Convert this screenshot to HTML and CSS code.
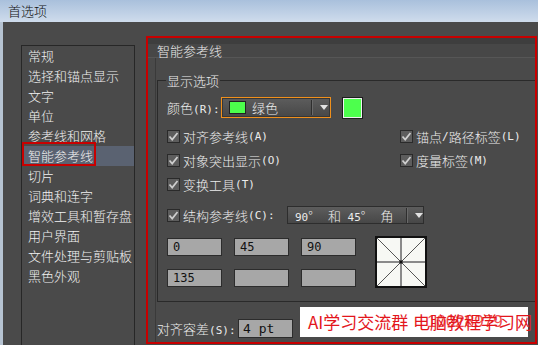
FILE: index.html
```html
<!DOCTYPE html>
<html lang="zh-CN">
<head>
<meta charset="utf-8">
<title>首选项</title>
<link rel="stylesheet" href="styles.css">
</head>
<body>
<div class="window">
  <div class="titlebar">首选项</div>
  <div class="main">
    <ul class="sidebar">
      <li>常规</li>
      <li>选择和锚点显示</li>
      <li>文字</li>
      <li>单位</li>
      <li>参考线和网格</li>
      <li class="active">智能参考线</li>
      <li>切片</li>
      <li>词典和连字</li>
      <li>增效工具和暂存盘</li>
      <li>用户界面</li>
      <li>文件处理与剪贴板</li>
      <li>黑色外观</li>
    </ul>
    <section class="panel">
      <div class="panel-head">智能参考线</div>
      <div class="panel-body">
        <fieldset class="group">
          <legend>显示选项</legend>
          <div class="color-row">
            <span class="label">颜色<span class="m">(R):</span></span>
            <div class="select focus">
              <span class="swatch-sm"></span>
              <span class="sel-text">绿色</span>
              <span class="sep"></span>
              <span class="arrow"></span>
            </div>
            <span class="swatch-lg"></span>
          </div>
          <div class="checks">
            <div class="check"><svg class="box" viewBox="0 0 13 13"><rect x="0.5" y="0.5" width="12" height="12" fill="#5d5d5d" stroke="#2a2a2a"/><path d="M2.5 6.5 L5.2 9.6 L10.5 3" fill="none" stroke="#cfcfcf" stroke-width="1.7"/></svg>对齐参考线<span class="m">(A)</span></div>
            <div class="check"><svg class="box" viewBox="0 0 13 13"><rect x="0.5" y="0.5" width="12" height="12" fill="#5d5d5d" stroke="#2a2a2a"/><path d="M2.5 6.5 L5.2 9.6 L10.5 3" fill="none" stroke="#cfcfcf" stroke-width="1.7"/></svg>锚点<span class="m">/</span>路径标签<span class="m">(L)</span></div>
            <div class="check"><svg class="box" viewBox="0 0 13 13"><rect x="0.5" y="0.5" width="12" height="12" fill="#5d5d5d" stroke="#2a2a2a"/><path d="M2.5 6.5 L5.2 9.6 L10.5 3" fill="none" stroke="#cfcfcf" stroke-width="1.7"/></svg>对象突出显示<span class="m">(O)</span></div>
            <div class="check"><svg class="box" viewBox="0 0 13 13"><rect x="0.5" y="0.5" width="12" height="12" fill="#5d5d5d" stroke="#2a2a2a"/><path d="M2.5 6.5 L5.2 9.6 L10.5 3" fill="none" stroke="#cfcfcf" stroke-width="1.7"/></svg>度量标签<span class="m">(M)</span></div>
            <div class="check"><svg class="box" viewBox="0 0 13 13"><rect x="0.5" y="0.5" width="12" height="12" fill="#5d5d5d" stroke="#2a2a2a"/><path d="M2.5 6.5 L5.2 9.6 L10.5 3" fill="none" stroke="#cfcfcf" stroke-width="1.7"/></svg>变换工具<span class="m">(T)</span></div>
          </div>
          <div class="struct-row">
            <div class="check struct"><svg class="box" viewBox="0 0 13 13"><rect x="0.5" y="0.5" width="12" height="12" fill="#5d5d5d" stroke="#2a2a2a"/><path d="M2.5 6.5 L5.2 9.6 L10.5 3" fill="none" stroke="#cfcfcf" stroke-width="1.7"/></svg>结构参考线<span class="m">(C):</span></div>
            <div class="select wide">
              <span class="sel-text"><span class="m">90</span><span class="fw">°</span><span class="m"> </span>和<span class="m"> 45</span><span class="fw">°</span><span class="m"> </span>角</span>
              <span class="sep"></span>
              <span class="arrow"></span>
            </div>
          </div>
          <div class="angles">
            <div class="angle-grid">
              <div class="field">0</div>
              <div class="field">45</div>
              <div class="field">90</div>
              <div class="field">135</div>
              <div class="field"></div>
              <div class="field"></div>
            </div>
            <svg class="diagram" width="52" height="52" viewBox="0 0 52 52">
              <rect x="1" y="1" width="50" height="50" fill="#f7f8f4" stroke="#111" stroke-width="2"/>
              <line x1="26" y1="2" x2="26" y2="50" stroke="#8a8a8a" stroke-width="2"/>
              <line x1="2" y1="26" x2="50" y2="26" stroke="#8a8a8a" stroke-width="2"/>
              <line x1="2" y1="2" x2="50" y2="50" stroke="#555" stroke-width="1"/>
              <line x1="50" y1="2" x2="2" y2="50" stroke="#555" stroke-width="1"/>
              <rect x="24.5" y="24.5" width="3" height="3" fill="#111"/>
            </svg>
          </div>
        </fieldset>
        <div class="tol-row">
          <span class="tol-label">对齐容差<span class="m">(S):</span></span>
          <div class="field tol">4 pt</div>
        </div>
      </div>
      <div class="watermark">
        <span class="wm-main">AI学习交流群</span>
        <span class="wm-num">10028979</span>
        <span class="wm-over">电脑教程学习网</span>
      </div>
    </section>
  </div>
</div>
</body>
</html>
```
FILE: styles.css
```css
html, body {
  margin: 0;
  padding: 0;
}
body {
  width: 538px;
  height: 345px;
  overflow: hidden;
  background: #4a4a4a;
  font-family: "Noto Sans CJK SC", sans-serif;
  font-size: 13px;
  font-weight: 300;
  color: #ececec;
}
.m {
  font-family: "DejaVu Sans Mono", monospace;
  font-size: 11px;
}
.fw {
  display: inline-block;
  width: 13px;
  text-align: left;
}
.window {
  display: flex;
  flex-direction: column;
  height: 345px;
}
.titlebar {
  flex: none;
  height: 22px;
  box-sizing: border-box;
  padding-left: 8px;
  line-height: 21px;
  color: #111;
  background: linear-gradient(#a9c0dc, #cfdcec);
}
.main {
  flex: 1;
  min-height: 0;
  display: flex;
  align-items: flex-start;
  border-left: 3px solid #b6c3d2;
  padding-left: 18px;
  background: #4a4a4a;
}
.sidebar {
  list-style: none;
  margin: 23px 0 0;
  padding: 0;
  width: 114px;
  height: 300px;
  box-sizing: border-box;
  border: 1px solid #272727;
  border-bottom: none;
  flex: none;
}
.sidebar li {
  height: 20px;
  line-height: 20px;
  padding-left: 6px;
  white-space: nowrap;
  color: #f2f2f2;
}
.sidebar li.active {
  position: relative;
  background: #5a6271;
}
.sidebar li.active::after {
  content: "";
  position: absolute;
  left: 0;
  top: -4px;
  width: 74px;
  height: 24px;
  box-sizing: border-box;
  border: 2px solid #c80000;
}
.panel {
  position: relative;
  flex: none;
  margin: 14px 0 0 11px;
  width: 391px;
  height: 308px;
  box-sizing: border-box;
  border: 2px solid #c80000;
  display: flex;
  flex-direction: column;
}
.panel-head {
  flex: none;
  height: 20px;
  box-sizing: border-box;
  padding: 6px 0 0 9px;
  line-height: 13px;
  background: linear-gradient(#3e3e3e 0 6px, #474747 6px);
  border-bottom: 1px solid #565656;
}
.panel-body {
  flex: 1;
  margin-left: 7px;
  border-left: 1px solid #3a3a3a;
  padding: 16px 0 0 1px;
}
.group {
  margin: 0;
  padding: 0 0 13px 9px;
  border: 1px solid #2a2a2a;
  border-right: none;
  min-width: 0;
}
.group legend {
  margin-left: -1px;
  padding: 0 1px;
  line-height: 13px;
}
.color-row {
  display: flex;
  align-items: center;
  height: 21px;
  margin-top: 10px;
}
.color-row .label {
  width: 54px;
  white-space: nowrap;
}
.select {
  display: flex;
  align-items: center;
  box-sizing: border-box;
  height: 21px;
  width: 110px;
  border: 1px solid #2d2d2d;
  background: linear-gradient(#5d5d5d, #474747);
}
.select.focus {
  border-color: #f0901c;
  box-shadow: inset 0 0 0 1px #363636;
}
.swatch-sm {
  width: 17px;
  height: 13px;
  box-sizing: border-box;
  margin-left: 7px;
  background: #4cff4c;
  border: 1px solid #222;
}
.sel-text {
  flex: 1;
  margin-left: 6px;
  white-space: nowrap;
}
.sep {
  width: 1px;
  height: 15px;
  background: #2e2e2e;
  box-shadow: 1px 0 0 #6a6a6a;
}
.arrow {
  width: 0;
  height: 0;
  margin: 0 2px 0 8px;
  border-left: 4px solid transparent;
  border-right: 4px solid transparent;
  border-top: 5px solid #e2e2e2;
}
.swatch-lg {
  margin-left: 12px;
  width: 19px;
  height: 20px;
  box-sizing: border-box;
  background: #4dff4d;
  border: 1px solid #f0f0f0;
  box-shadow: 0 0 0 1px #1e1e1e;
}
.checks {
  display: grid;
  grid-template-columns: 233px auto;
  grid-auto-rows: 24px;
  margin-top: 6px;
}
.check {
  display: flex;
  align-items: center;
  white-space: nowrap;
}
.box {
  width: 13px;
  height: 13px;
  margin-right: 3px;
  flex: none;
}
.struct-row {
  display: flex;
  align-items: center;
  height: 18px;
  margin-top: 10px;
}
.check.struct {
  width: 120px;
}
.select.wide {
  width: 137px;
  height: 18px;
}
.select.wide .sel-text {
  margin-left: 7px;
}
.select.wide .arrow {
  margin-right: 0;
}
.angles {
  display: flex;
  align-items: center;
  gap: 19px;
  margin-top: 12px;
}
.angle-grid {
  display: grid;
  grid-template-columns: repeat(3, 55px);
  grid-auto-rows: 18px;
  column-gap: 12px;
  row-gap: 13px;
}
.field {
  box-sizing: border-box;
  background: #a7a7a7;
  border: 1px solid #2c2c2c;
  color: #111;
  font-family: "DejaVu Sans Mono", monospace;
  font-size: 12px;
  line-height: 16px;
  padding-left: 5px;
}
.diagram {
  flex: none;
  display: block;
}
.tol-row {
  display: flex;
  align-items: center;
  height: 19px;
  margin-top: 17px;
}
.tol-label {
  width: 81px;
  white-space: nowrap;
}
.field.tol {
  width: 55px;
  height: 19px;
  line-height: 17px;
  padding-left: 4px;
  font-size: 13px;
}
.watermark {
  position: absolute;
  left: 152px;
  top: 269px;
  width: 228px;
  height: 30px;
  background: #fff;
  color: #e3161c;
  font-size: 17px;
  font-weight: 400;
  line-height: 30px;
  white-space: nowrap;
}
.wm-main {
  position: absolute;
  left: 8px;
  top: 0;
}
.wm-num {
  position: absolute;
  left: 127px;
  top: 0;
  color: #ef5050;
  font-family: "Liberation Sans", sans-serif;
}
.wm-over {
  position: absolute;
  left: 113px;
  top: 0;
}
```
